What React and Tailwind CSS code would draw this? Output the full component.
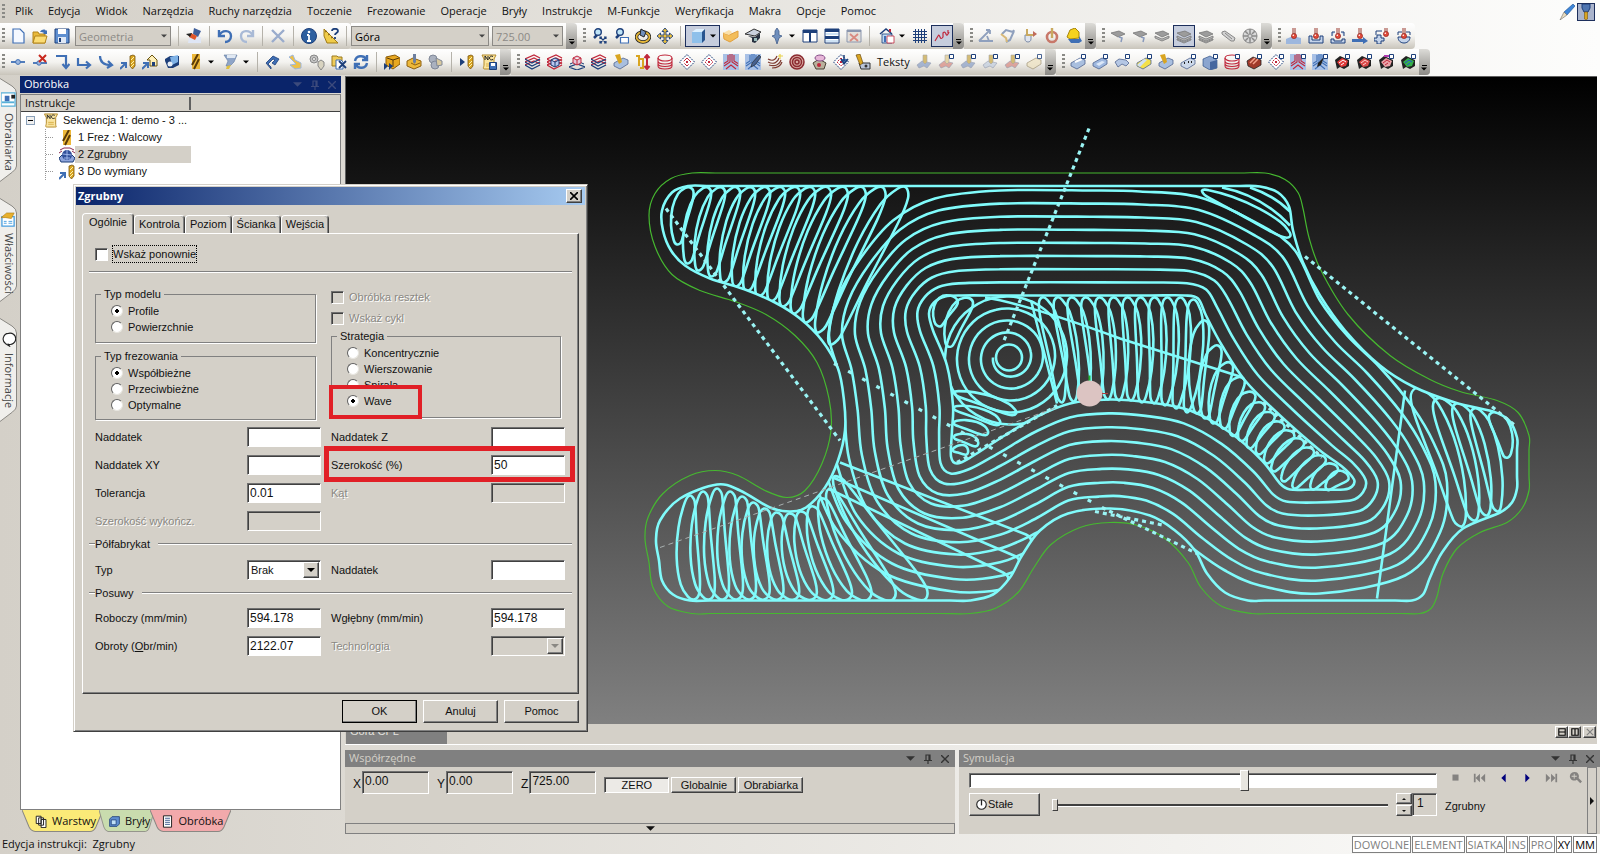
import React, { useState } from 'react';
import clsx from 'clsx';

/* ---------- icons ---------- */

const N = '#1d3f7a';
const B = '#3f6fb5';
const G = '#d9a521';
const R = '#c0283c';

const Layers = ({ c = N, d = R }) => (
  <g fill="none" strokeWidth="1.300">
    <path d="M0 5l9-4 6 3M0 8l9-4 6 3M0 11l9-4 6 3" stroke={d} />
    <path d="M0 5l7 4 8-4M0 8l7 4 8-4M0 11l7 4 8-4" stroke={c} />
  </g>
);
const Diamond = ({ inner }) => (
  <g fill="none">
    <path d="M8 .5L15.500 8 8 15.500.5 8z" stroke={N} strokeDasharray="2 1" fill="#fff" />
    <path d="M8 4l4 4-4 4-4-4z" stroke={R} strokeDasharray={inner ? '2 1' : '6 3'} />
    <path d="M8 7l1 1-1 1-1-1z" stroke={R} />
  </g>
);
const Badge = () => <path d="M11.500.5h4v4h-4z" fill="#fff" stroke={N} />;
const Slab = ({ c = '#a9bfdf', s = '#51658f' }) => <path d="M1 9l9-5 5 2v4l-8 5-6-3z" fill={c} stroke={s} strokeWidth=".8" />;
const Drill = ({ x = 8, c = G }) => (
  <g transform={`translate(${x} 0)`}>
    <path d="M0 2l3-1 2 1v10l-2.500 3L0 12z" fill={c} stroke="#7a5510" strokeWidth=".8" />
    <path d="M1 6l3-3M1 10l3-3M1 13l3-3" stroke="#fff3b0" />
  </g>
);
const Lens = () => (
  <g>
    <path d="M3 10l3-3" stroke={N} strokeWidth="2.500" />
    <circle cx="7" cy="4" r="3.300" fill="#bfe4f7" stroke={N} strokeWidth="1.400" />
  </g>
);
const Probe = () => (
  <g>
    <path d="M7 0v7M9 0v7" stroke="#9a3a30" />
    <circle cx="8" cy="8" r="2.600" fill="#e04a3a" stroke="#8c1a14" strokeWidth=".6" />
    <circle cx="7.300" cy="7.300" r=".8" fill="#fff" />
  </g>
);
const Rings = ({ c = R }) => (
  <g fill="none" stroke={c} strokeWidth="1.100">
    <ellipse cx="8" cy="4" rx="7" ry="3" />
    <path d="M1 4v8c0 4 14 4 14 0V4M1 7c0 4 14 4 14 0M1 9.500c0 4 14 4 14 0" />
  </g>
);
const Sheet = ({ lines }) => (
  <g fill="#9c9c9c" stroke="#777" strokeWidth=".8">
    <path d="M1 5l8-2 6 3-7 3z" />
    {lines > 1 && <path d="M1 8l7 3 7-3v2l-7 3-7-3z" fill="#b4b4b4" />}
    {lines > 2 && <path d="M1 11l7 3 7-3v1l-7 3-7-3z" fill="#c4c4c4" />}
    {lines === 1 && <path d="M9 9l3 1-1 4" fill="none" stroke="#8899bb" strokeWidth="1.500" />}
  </g>
);
const Hollow = ({ c, d }) => (
  <g>
    <path d="M1 6l5-4 9 4v6l-5 3-4-2-3 2z" fill="#222" />
    <path d="M3 8l5-4 6 3-2 5-5 1z" fill={c} />
    <path d="M5 9l4-3 3 2M7 11l3-2" stroke={d} fill="none" />
  </g>
);
const Blue3 = ({ c = R }) => (
  <g>
    <path d="M0 0h16v16H0z" fill="#a9c1e6" />
    <path d="M7 0v8l-6 4M9 0v8l6 4M5 1v6L1 9.500M11 1v6l4 2.500M3 15l5-4 5 4" stroke={c} fill="none" strokeWidth="1.100" />
  </g>
);
const Tilted = ({ c, d = '#c9a94a' }) => (
  <g opacity=".75">
    <path d="M1 11l5-4 9 2-4 5-3-2-5 2z" fill={c} stroke="#7c86a0" strokeWidth=".6" />
    <path d="M7 1h4v7l-2 2-2-2z" fill={d} stroke="#8d8d8d" strokeWidth=".6" />
  </g>
);
const Roll = () => (
  <g>
    <path d="M1 1h14l-2 4v7c0 3 2 3-1 3H4c-3 0-1-2-1-4V5z" fill="#f9e4a0" stroke="#b38a2a" />
    <path d="M4 6V2l3 4V2M12 2.500c-2-1-3.500 0-3.500 1.500s1.500 2.500 3.500 1.500" stroke="#222" fill="none" />
    <path d="M5 10h6M5 12h6" stroke="#d9b04a" />
  </g>
);

const icons = {
  new: <path d="M3 1h7l4 4v10H3z" fill="#f4f8ff" stroke={B} strokeWidth="1.200" />,
  open: <g><path d="M1 4h5l1 2h6v9H1z" fill="#e9b93a" stroke="#b3841a" /><path d="M3 8h12l-2 7H1z" fill="#fbdc74" stroke="#b3841a" /><path d="M8 4c2-3 5-3 6-1l1-1v4h-4l1-1c-1-1-2-1-4-1z" fill={B} /></g>,
  save: <g><path d="M1 1h14v14H1z" fill="#5f8fd0" stroke={N} /><path d="M4 1h8v5H4z" fill="#fff" /><path d="M4 9h8v6H4z" fill="#dfe8f5" /><path d="M5 10h2v4H5z" fill={N} /></g>,
  paint: <g><path d="M3 9h12v6H2z" fill="#dfe6f5" /><path d="M8 0l7 3-3 6-5-3z" fill="#3f5f9a" /><path d="M5 5l6 3-2 4-6-3z" fill="#e0562a" /><path d="M0 6l6-1-2 4z" fill="#222" /></g>,
  undo: <path d="M2 2v6h6M2 8C5 1 14 2 14 8c0 4-3 6-6 6" fill="none" stroke={B} strokeWidth="2.400" />,
  redo: <path d="M14 2v6H8M14 8C11 1 2 2 2 8c0 4 3 6 6 6" fill="none" stroke="#a9bad6" strokeWidth="2.400" />,
  cross: <path d="M2 2l12 12M14 2L2 14" stroke="#9aaccc" strokeWidth="2.400" />,
  info: <g><circle cx="8" cy="8" r="7.500" fill="#2d5f9f" stroke={N} /><path d="M8 7v6M6 7h2M6 13h4" stroke="#fff" strokeWidth="1.800" /><circle cx="8" cy="4" r="1.300" fill="#fff" /></g>,
  measure: <g><path d="M1 1l14 14H4L1 8z" fill="#f0cc4a" stroke="#a07a14" /><path d="M2 4l2-1M5 7l2-1M8 10l2-1" stroke="#7a5510" /><path d="M9 3c0-3 6-3 6 0 0 2-3 2-3 4M12 9v2" stroke={N} strokeWidth="1.800" fill="none" /></g>,
  zoomFit: <g><Lens /><path d="M9 9l6 6M15 9l-6 6M9 11V9h2M13 9h2v2M9 13v2h2M15 13v2h-2" stroke={N} fill="none" strokeWidth="1.200" /></g>,
  zoomBox: <g><Lens /><path d="M7.500 9.500h8v5.500h-8z" fill="#fff" stroke={B} strokeWidth="1.200" /></g>,
  orbit: <g fill="none"><ellipse cx="8" cy="9" rx="6.500" ry="5" stroke="#222" strokeWidth="3.400" /><ellipse cx="8" cy="9" rx="6.500" ry="5" stroke="#e8b93a" strokeWidth="1.800" /><path d="M6 1l5 3-2 5-4-2z" fill="#6f8fbd" stroke="#222" /></g>,
  pan: <path d="M8 0l3 3.500H9V7h3.500V5L16 8l-3.500 3V9H9v3.500h2L8 16l-3-3.500h2V9H3.500v2L0 8l3.500-3v2H7V3.500H5z" fill="#f0c23a" stroke={N} strokeWidth=".9" />,
  cube: <g><path d="M2 4l4-3h9l-3 3z" fill="#dff1ff" /><path d="M2 4h10v11H2z" fill="#8fc0ea" /><path d="M12 4l3-3v11l-3 3z" fill="#27548f" /></g>,
  part: <g><path d="M0 5l6 2 9-4v6l-8 5-6-3z" fill="#f3bd5a" stroke="#e0a040" /><path d="M0 5l6-3 3 2-3 3z" fill="#fbe0a8" /></g>,
  shaded: <g><path d="M0 6l9-5 7 3-6 4z" fill="#c9d0dc" stroke="#333" /><path d="M3 8l7 1 5-4v5l-5 5-3-1v-4z" fill="#27303f" /><path d="M9 10h3v3H9z" fill="#9bb" /></g>,
  pin: <path d="M8 0l2 3v4l3 1-3 2-2 6-2-6-3-2 3-1V3z" fill="#6f8fbd" stroke="#445f8c" strokeWidth=".8" />,
  splitV: <g><path d="M1 2h14v12H1z" fill="#fff" stroke={N} /><path d="M1 2h14v3H1z" fill={N} /><path d="M8 2v12" stroke={N} strokeWidth="2" /></g>,
  splitH: <g><path d="M1 1h14v14H1z" fill="#fff" stroke={N} /><path d="M1 1h14v3H1zM1 8h14v3H1z" fill={N} /><path d="M2 5h12v2H2zM2 12h12v2H2z" fill="#cfe3f5" /></g>,
  closeWin: <g><path d="M1 2h14v12H1z" fill="#e4e0da" stroke="#8a96ae" /><path d="M1 2h14v2H1z" fill="#8a96ae" /><path d="M4 6l8 7M12 6l-8 7" stroke="#d98a80" strokeWidth="1.800" /></g>,
  house: <g><path d="M1 6l6-5 6 5" fill="none" stroke={N} strokeWidth="1.500" /><path d="M11 1v3" stroke={R} strokeWidth="2" /><path d="M3 6h10v9H3z" fill="#bdd8f2" stroke={N} strokeWidth=".8" /><path d="M8 8h7v7H8z" fill="#fff" stroke={R} strokeWidth=".8" /><path d="M5 8h2v6H5z" fill={B} /></g>,
  grid: <path d="M3.500 1v14M6.500 1v14M9.500 1v14M12.500 1v14M1 3.500h14M1 6.500h14M1 9.500h14M1 12.500h14" stroke={N} />,
  curve: <path d="M1 13l3-5q1-2 2 1t3 0V5q2-2 3 1t3-2M14 2v3" stroke={R} fill="none" strokeWidth="1.200" />,
  angle: <path d="M1 13h14M1 13L12 2M12 2v4M12 2H8M11 13l-2-5" stroke="#8fa0bd" fill="none" strokeWidth="1.800" />,
  turn: <g fill="none" strokeWidth="2"><path d="M2 6l4-4 7 2 1-2M14 3l-4 9-4 2" stroke="#8fa0bd" /><path d="M1 6l5 4 1 4" stroke="#d8b978" /></g>,
  hook: <g><path d="M3 7h6v4c0 4-6 4-6 0z" fill="#dfe4ee" stroke="#7d8ca8" /><path d="M5 1v6h7" fill="none" stroke="#c9a960" strokeWidth="2" /><path d="M11 3l4 3-4 3z" fill="#c06a5a" /></g>,
  loop: <g fill="none"><circle cx="8" cy="9" r="5" stroke="#c8786a" strokeWidth="2.600" /><path d="M8 0v10" stroke="#c9a960" strokeWidth="2.400" /></g>,
  yellow: <g><path d="M4 2l5-2 4 4v6l-9 1-3-2z" fill="#f6d21e" stroke="#a8860a" /><path d="M2 11h11V8l3 5-3 2H5z" fill={B} /></g>,
  sheet1: <Sheet lines={1} />,
  sheet2: <Sheet lines={2} />,
  sheet3: <Sheet lines={3} />,
  clip: <path d="M2 4l3-1 10 7-1 3-3 0L2 6zM5 5l7 6" fill="#d2d2d2" stroke="#888" />,
  wheel: <g fill="none" stroke="#8a8a8a"><circle cx="8" cy="8" r="7" fill="#d8d8d8" /><circle cx="8" cy="8" r="2" /><path d="M8 1v5M8 10v5M1 8h5M10 8h5M3 3l3 3M13 13l-3-3M13 3l-3 3M3 13l3-3" strokeWidth="1.500" /></g>,
  probe1: <g><path d="M0 11l7-3 8 2v6H0z" fill="#9db7de" /><Probe /></g>,
  probe2: <g><path d="M1 8v7h14V8h-3v4H4V8z" fill="#c5d4ea" stroke={N} /><Probe /></g>,
  probe3: <g><path d="M2 8V4h3M14 8V4h-3M1 15h14v-4h-3v2H4v-2H1z" fill="#c5d4ea" stroke={N} /><Probe /></g>,
  probe4: <g><path d="M0 11h11V9l5 4-5 3v-2H0z" fill={B} /><Probe /></g>,
  probe5: <g><path d="M3 7h4v3h3v3H7v3H3v-3H0v-3h3z" fill="#c5d4ea" stroke={N} /><path d="M2 7V3h6" fill="none" stroke={N} /><g transform="translate(4 -2)"><Probe /></g></g>,
  probe6: <g><path d="M2 9h12c0 8-12 8-12 0z" fill="#c5d4ea" stroke={N} /><path d="M2 7V4h4M14 7V4h-4" fill="none" stroke={N} /><Probe /></g>,
  node: <g><path d="M1 8h14" stroke={B} strokeWidth="1.800" /><circle cx="8" cy="8" r="2.400" fill="#9db7de" stroke={B} /></g>,
  nodeDel: <g><path d="M1 9h14" stroke={B} strokeWidth="1.800" /><circle cx="7" cy="9" r="2.200" fill="#9db7de" stroke={B} /><path d="M7 1l7 7M14 1L7 8" stroke="#c8281e" strokeWidth="2" /></g>,
  stepDown: <path d="M2 2h10v10M8.500 10l3.500 4 3.500-4" fill="none" stroke={B} strokeWidth="2.200" />,
  stepRight: <path d="M2 4v7h11M10 7.500l4 3.500-4 3.500" fill="none" stroke={B} strokeWidth="2.200" />,
  curveRight: <path d="M2 2c0 6 4 9 11 9M10 7l4 4-5 3" fill="none" stroke={B} strokeWidth="2.200" />,
  drillIn: <g><path d="M0 15l5-5M1 9h5v5" stroke={B} strokeWidth="2" fill="none" /><Drill x={10} /></g>,
  drillHome: <g><path d="M0 15l5-5M1 9h5v5" stroke={B} strokeWidth="2" fill="none" /><path d="M5 6l5-5 5 5v6H8V6z" fill="#fff0b8" stroke="#6a5510" /><path d="M10 8h3v4h-3z" fill={N} /></g>,
  machine: <g><path d="M1 7l3 7h5l6-3V2H6L1 5z" fill={N} /><path d="M6 3l8-2v7l-6 3z" fill="#7fb2e6" /><circle cx="6" cy="10" r="2.500" fill="#e6eef8" /></g>,
  mill: <g><path d="M4 0h8v15H4z" fill="#edb83a" /><path d="M4 11l6-11M6 15l5-10" stroke="#5b3a06" strokeWidth="2" /></g>,
  funnel: <g><path d="M1 1h13l-3 7-4 4H3l2-5z" fill="#8fa5c8" stroke="#5f789f" strokeWidth=".6" /><path d="M4 1h9l-1 3H4z" fill="#e0e8f2" /><path d="M4 12l4-1-2 4H3z" fill="#e0c040" /></g>,
  blueTool: <path d="M1 9l7-7 6 3-4 6-3-2 3-3-2-1-5 5 3 3v2z" fill={B} stroke={N} strokeWidth=".8" />,
  goldTool: <path d="M2 3l4-2 2 5 6 3v5l-6 1-5-4 6-1z" fill="#edc04a" stroke="#9db7de" />,
  gears: <g fill="#c4c4c4" stroke="#888"><circle cx="5" cy="5" r="4" /><circle cx="5" cy="5" r="1.500" fill="#fff" /><path d="M9 8l3-2 3 2v4l-3 4-3-4z" fill="#d8d3c0" /></g>,
  copyDel: <g><path d="M1 2h5l1 1h4v9H1z" fill="#f0cc5a" stroke="#9b7a1e" /><path d="M5 6h5l2 2v7H5z" fill="#fff" stroke={B} /><path d="M8 7l7 7M15 7l-7 7" stroke={N} strokeWidth="1.800" /></g>,
  refresh: <path d="M2 7c1-6 9-6 11-2M14 1v5H9M14 9c-1 6-9 6-11 2M2 15v-5h5" fill="none" stroke={B} strokeWidth="2.400" />,
  goldBox: <g><path d="M2 3l9-2 5 3v6l-7 5-7-4z" fill="#e8a820" stroke="#8d5c06" /><path d="M3 4l6 2v7M9 6l6-2" stroke="#5b3a06" fill="none" /><path d="M0 9l4 3-4 4zM5 9l4 3-4 4z" fill={N} /></g>,
  goldHand: <g><path d="M1 7l6-3 8 3v5l-7 3-7-3z" fill="#edb83a" stroke="#8d6010" /><path d="M7 0h3v8l-1.500 2L7 8z" fill="#6d7f9f" /><path d="M5 9l4 2 5-2" stroke="#8d6010" fill="none" /></g>,
  grayGear: <g fill="#aab1bf" stroke="#808898"><circle cx="5" cy="5" r="4" /><circle cx="7" cy="11" r="4" /><path d="M8 4l6 3v4l-5 1z" fill="#d8c9a0" /></g>,
  playDrill: <g><path d="M1 4l5 4-5 4z" fill={N} /><Drill x={9} /></g>,
  ncSave: <g><Roll /><path d="M8.500 8.500h7v7h-7z" fill={B} stroke={N} /><path d="M10 9h4v3h-4z" fill="#fff" /></g>,
  nc: <Roll />,
  layers1: <Layers />,
  layers2: <g><Layers c={R} d={R} /><path d="M4 6l4-2 4 2v5l-4 2-4-2zM8 8v5M4 6l4 2 4-2" fill="#b9c8ee" stroke={N} /></g>,
  layers3: <g><path d="M0 13l8-3 8 3-8 3z" fill="none" stroke={N} strokeWidth="1.200" /><path d="M1 10l7-3 7 3" stroke={N} fill="none" /><path d="M4 4l4-2 4 2v5l-4 2-4-2zM8 6v5M4 4l4 2 4-2" fill="#e6c6da" stroke={R} /></g>,
  layers4: <Layers c={N} />,
  pocket: <g><Slab /><path d="M2 1l5-1 2 8-3 2z" fill={G} /></g>,
  depth: <g><path d="M1 2h3v10M4 5h4v9H5" stroke={G} fill="none" strokeWidth="2" /><path d="M12 1v14M9.500 4L12 1l2.500 3M9.500 12l2.500 3 2.500-3" stroke={R} fill="none" strokeWidth="2" /></g>,
  rings: <Rings />,
  diamond1: <Diamond />,
  diamond2: <Diamond inner />,
  blue3: <Blue3 />,
  bluePen: <g><Blue3 c={B} /><path d="M14 1l-7 8-1 4 4-2 6-8z" fill="#46618f" stroke="#222" strokeWidth=".6" /></g>,
  waves: <g fill="none" strokeWidth="1.200"><path d="M1 5c5 3 8 0 9-3M1 8c6 3 10 0 11-4M2 11c7 2 11-1 12-5M5 14c6 0 9-3 10-6" stroke="#7d3a30" /><path d="M13 0v5M11 2h5" stroke="#e8d24a" /></g>,
  target: <g fill="none" stroke="#8b2a30" strokeWidth="1.500"><circle cx="8" cy="8" r="7" fill="#d8a8a0" /><circle cx="8" cy="8" r="4.500" /><circle cx="8" cy="8" r="2" /></g>,
  dome: <g><path d="M2 9l6-4 7 4-2 6-8 0z" fill="#b9b09c" stroke="#4a4236" /><ellipse cx="9" cy="4" rx="5" ry="3" fill="#e7b6d8" stroke="#86508a" /><circle cx="8" cy="11" r="2" fill={R} /></g>,
  diamond3: <g><Diamond inner /><path d="M11 1v6M8 5l3 5 4-5" stroke={N} fill={B} strokeWidth="1.500" /></g>,
  drillPlate: <g><path d="M4 9l11 0v6H6z" fill="#b9c4d8" stroke="#333" /><path d="M1 1l4-1 3 9-3 2z" fill={G} stroke="#5b3a06" strokeWidth=".6" /><circle cx="11" cy="12" r="1.500" fill="#333" /></g>,
  tilt1: <Tilted c="#8ea2c8" />,
  tilt2: <g><Tilted c="#d88d84" d="#dfc98e" /><Badge /></g>,
  tilt3: <g><Tilted c="#8ea2c8" /><Badge /></g>,
  tilt4: <g><Tilted c="#c3cede" /><Badge /></g>,
  tilt5: <g><Tilted c="#d88d84" /><Badge /></g>,
  tilt6: <g opacity=".8"><Slab c="#eee3c4" s="#9a8d6c" /><Badge /></g>,
  slab1: <g><Slab /><path d="M5 8l7-3" stroke="#fff" strokeWidth="2" /><Badge /></g>,
  slab2: <g><Slab c="#9db7de" /><path d="M4 10l6-3 3 1-6 4z" fill="#dce8f8" /><Badge /></g>,
  slab3: <g><path d="M1 8l4-3 7 1 3 3-3 3-4-2-4 3z" fill="#b5c7e4" stroke="#51658f" strokeWidth=".8" /><Badge /></g>,
  slab4: <g><Slab c="#f3e04a" /><path d="M1 11l7-6 3 1-7 7z" fill="#cfe0f5" /><Badge /></g>,
  slabDots: <g><Slab c="#cdd9ea" /><path d="M4 9h1M8 8h1M11 8h1" stroke="#222" strokeWidth="2" /><Badge /></g>,
  block: <g><path d="M1 5l7-3 7 4v8l-7 2-7-4z" fill="#8ba5cf" stroke={N} strokeWidth=".6" /><path d="M8 8l7-2v8l-7 2z" fill="#46679f" /><Badge /></g>,
  ringsB: <g><Rings /><Badge /></g>,
  redBlock: <g><path d="M1 7l6-4 8 3v5l-7 4-6-3z" fill="#a03a2a" stroke="#222" strokeWidth=".8" /><path d="M4 9l5-5M7 10l5-5" stroke="#f3a08a" strokeWidth="1.500" /><Badge /></g>,
  diamondB: <g><Diamond inner /><Badge /></g>,
  blue3B: <g><Blue3 /><Badge /></g>,
  bluePenB: <g><Blue3 c={B} /><path d="M12 3l-6 6-1 4 4-2z" fill="#222" /><Badge /></g>,
  hol1: <g><Hollow c="#e23a3a" d="#fff" /><Badge /></g>,
  hol2: <g><Hollow c="#d94a4a" d="#ffd0d0" /><Badge /></g>,
  hol3: <g><Hollow c="#e9a3a8" d={R} /><path d="M6 2h6" stroke="#b03ab0" strokeWidth="2" /><Badge /></g>,
  hol4: <g><Hollow c="#35b04a" d="#2a4fd0" /><Badge /></g>,
  rough: <g><path d="M1 3l4-2h6l4 2M0 6l3-2M16 6l-3-2" stroke="#8b2a50" fill="none" /><path d="M0 11l3-3h10l3 3-2 4H2z" fill="#8fa5dc" stroke={N} /><circle cx="8" cy="8" r="5" fill="#32509a" /><path d="M8 3v10M3.500 7l9 1M5 11h6" stroke="#9fb5ea" /></g>,
  pencil: <g><path d="M14 0l2 2-8 9-3-3z" fill="#3f86d8" stroke="#1a4f90" strokeWidth=".6" /><path d="M5 8l3 3-7 5z" fill="#e8dcc0" stroke="#555" strokeWidth=".5" /></g>,
  spindle: <g><path d="M4 0h8v4l-2 4H6L4 4z" fill="#4f75b0" stroke={N} /><path d="M6.500 8h3v7l-1.500 1-1.500-1z" fill={G} stroke="#7a5510" strokeWidth=".6" /></g>,
  lathe: <g><path d="M0 1h15v14H0z" fill="#fff" stroke="#58b0d8" strokeWidth="1.400" /><path d="M4 4h5v6H4z" fill={B} /><path d="M11 3h4v4h-4z" fill="#222" /><path d="M1 11h13" stroke="#58b0d8" strokeWidth="2" /></g>,
  props: <g><path d="M1 5h13v10H1z" fill="#fff" stroke="#4aa0e0" strokeWidth="1.400" /><path d="M3 10h3M3 12h3M8 10h4M8 12h4" stroke="#4aa0e0" /><path d="M0 6l6-5 8 0-3 6-6-1z" fill="#e8b02c" stroke="#a87a14" strokeWidth=".6" /></g>,
  bubble: <path d="M8 1.500a6 6 0 1 1 0 11.500l1 2-4-2.500A6 6 0 0 1 8 1.500z" fill="#fff" stroke="#222" strokeWidth="1.200" />,
  stack: <path d="M1.500 1.500h6v9h-6zM4.500 3.500h6v9h-6zM7.500 5.500h6v10h-6z" fill="#fff" stroke="#222" strokeWidth="1.200" />,
  solid: <g stroke={N}><path d="M2 5l3-3h9v9l-3 3H2z" fill="#5f8fd0" /><path d="M4 6h6v6H4z" fill="#bfe0f7" /></g>,
  list: <g><path d="M3 1h10v14H3z" fill="#fff" stroke="#222" strokeWidth="1.200" /><path d="M5 4h6M5 6.500h6M5 9h6M5 11.500h6" stroke={N} /></g>,
};

function Icon({ name, className = 'h-4 w-4' }) {
  return <svg viewBox="0 0 16 16" className={clsx('shrink-0', className)} aria-hidden="true">{icons[name]}</svg>;
}

const Caret = ({ className }) => (
  <svg viewBox="0 0 8 4" className={clsx('h-1 w-2', className)} aria-hidden="true"><path d="M0 0h8L4 4z" fill="currentColor" /></svg>
);

/* ---------- toolbars ---------- */

const Grip = () => <span className="mx-[2px] h-4 w-[3px] shrink-0 bg-[repeating-linear-gradient(#8a8a86_0_2px,transparent_2px_4px)]" />;
const Divider = () => <span className="mx-1 h-5 w-px shrink-0 bg-[#b5b2aa]" />;

const Overflow = () => (
  <button aria-label="Więcej" className="flex h-full w-[11px] shrink-0 flex-col items-center justify-end gap-px rounded-r bg-linear-to-b from-[#dddcd8] to-[#8c8a86] pb-1 text-black">
    <span className="h-px w-[5px] bg-black" />
    <Caret className="w-[6px]" />
  </button>
);

function ToolButton({ name }) {
  const [icon, flag] = name.split(':');
  const pressed = flag === 'on' || flag === 'onmenu';
  const menu = flag === 'menu' || flag === 'onmenu';
  return (
    <button
      aria-label={icon}
      className={clsx(
        'flex h-[22px] shrink-0 items-center justify-center',
        menu ? 'w-[35px] gap-1' : 'w-[22px]',
        pressed && 'border border-[#1d2f5c] bg-[#c6cddd]'
      )}
    >
      <Icon name={icon} />
      {menu && <Caret className="w-[6px] text-black" />}
    </button>
  );
}

function ToolGroup({ items, more = true, children }) {
  return (
    <div className="flex h-full shrink-0 items-center rounded-r bg-linear-to-b from-white via-[#f4f3f0] to-[#c9c5bb] not-first:pl-1">
      <Grip />
      {children}
      {items.map((item, i) => {
        if (item === '|') return <Divider key={i} />;
        if (item[0] === '"') return <button key={i} className="px-[3px] text-[11px]">{item.slice(1)}</button>;
        return <ToolButton key={i} name={item} />;
      })}
      {more && <Overflow />}
    </div>
  );
}

function FlatSelect({ value, className, muted }) {
  return (
    <span className={clsx('relative mr-[3px] h-5 shrink-0', className)}>
      <select
        aria-label={value}
        defaultValue={value}
        disabled={muted}
        className={clsx('block h-full w-full appearance-none border border-[#8c8a86] bg-[#d4d0c8] px-[3px] text-[11px] leading-none opacity-100', muted ? 'text-[#8c8a86]' : 'text-black')}
      >
        <option>{value}</option>
      </select>
      <Caret className="pointer-events-none absolute top-2 right-1 w-[6px] text-[#444]" />
    </span>
  );
}

const editTools = ['paint', '|', 'undo', 'redo', '|', 'cross', '|', 'info', 'measure', '|'];
const viewTools = ['zoomFit', 'zoomBox', 'orbit', 'pan', '|', 'cube:onmenu', 'part', 'shaded', 'pin:menu', 'splitV', 'splitH', 'closeWin', '|', 'house:menu', 'grid', 'curve:on'];
const turnTools = ['angle', 'turn', 'hook', 'loop', 'yellow'];
const sheetTools = ['sheet1', 'sheet1', 'sheet2', 'sheet3:on', 'sheet3', 'clip', 'wheel'];
const probeTools = ['probe1', 'probe2', 'probe3', 'probe4', 'probe5', 'probe6'];
const moveTools = ['node', 'nodeDel', 'stepDown', 'stepRight', 'curveRight', 'drillIn', 'drillHome', 'machine', 'mill:menu', 'funnel:menu', '|', 'blueTool', 'goldTool', 'gears', 'copyDel', 'refresh', '|', 'goldBox', 'goldHand', 'grayGear', '|', 'playDrill', 'ncSave'];
const cycleTools = ['layers1', 'layers2', 'layers3', 'layers4', 'pocket', 'depth', 'rings', 'diamond1', 'diamond2', 'blue3', 'bluePen', 'waves', 'target', 'dome', 'diamond3', 'drillPlate', '"Teksty', 'tilt1', 'tilt2', 'tilt3', 'tilt4', 'tilt5', 'tilt6'];
const surfaceTools = ['slab1', 'slab2', 'slab3', 'slab4', 'pocket', 'slabDots', 'block', 'ringsB', 'redBlock', 'diamondB', 'blue3B', 'bluePenB', 'hol1', 'hol2', 'hol3', 'hol4'];

const menuItems = ['Plik', 'Edycja', 'Widok', 'Narzędzia', 'Ruchy narzędzia', 'Toczenie', 'Frezowanie', 'Operacje', 'Bryły', 'Instrukcje', 'M-Funkcje', 'Weryfikacja', 'Makra', 'Opcje', 'Pomoc'];

function Header() {
  return (
    <header className="shrink-0">
      <div className="flex h-[23px] items-center">
        <Grip />
        <nav className="flex flex-1 gap-[15px] pb-px pl-2 text-[11px]">
          {menuItems.map((m) => <button key={m} className="whitespace-nowrap">{m}</button>)}
        </nav>
        <button aria-label="CAD" className="px-[2px]"><Icon name="pencil" /></button>
        <button aria-label="CAM" className="mr-[5px] border border-[#1d2f5c] bg-[#aab4cc]"><Icon name="spindle" /></button>
      </div>
      <div className="flex h-[26px] overflow-hidden">
        <ToolGroup items={editTools} more={false}>
          <ToolButton name="new" />
          <ToolButton name="open" />
          <ToolButton name="save" />
          <FlatSelect value="Geometria" className="ml-[2px] w-24" muted />
          <Divider />
        </ToolGroup>
        <div className="flex h-full items-center bg-linear-to-b from-white via-[#f4f3f0] to-[#c9c5bb]">
          <FlatSelect value="Góra" className="w-[138px]" />
          <FlatSelect value="725.00" className="w-[71px]" muted />
          <Overflow />
        </div>
        <ToolGroup items={viewTools} />
        <ToolGroup items={turnTools} />
        <ToolGroup items={sheetTools} />
        <ToolGroup items={probeTools} more={false} />
      </div>
      <div className="flex h-[26px] overflow-hidden">
        <ToolGroup items={moveTools} />
        <ToolGroup items={cycleTools} />
        <ToolGroup items={surfaceTools} />
      </div>
    </header>
  );
}

/* ---------- left side ---------- */

const sideTabs = [
  { label: 'Obrabiarka', icon: 'lathe' },
  { label: 'Właściwości', icon: 'props' },
  { label: 'Informacje', icon: 'bubble' },
];

function SideTabs() {
  return (
    <div className="flex w-5 shrink-0 flex-col gap-4 pt-[2px]">
      {sideTabs.map((t) => (
        <button key={t.label} className="relative flex h-[104px] w-[17px] flex-col items-center pt-[14px] text-[#444]">
          <svg viewBox="0 0 17 104" preserveAspectRatio="none" className="absolute inset-0 h-full w-full" aria-hidden="true">
            <path d="M0 .5L12 8q4.500 3 4.500 7v73q0 3-4 6L0 103.500" fill="#f0efec" stroke="#8a8883" />
          </svg>
          <Icon name={t.icon} className="relative h-[15px] w-[15px]" />
          <span className="relative mt-[6px] text-[11px] leading-[14px] whitespace-nowrap [writing-mode:vertical-rl]">{t.label}</span>
        </button>
      ))}
    </div>
  );
}

function TitleTools({ className }) {
  return (
    <span className={clsx('flex items-center gap-[9px]', className)}>
      <button aria-label="Menu"><Caret className="h-[5px] w-[9px]" /></button>
      <button aria-label="Przypnij">
        <svg viewBox="0 0 8 10" className="h-[10px] w-2" aria-hidden="true"><path d="M2 6V1h4v5M5 1v5M0 6.500h8M4 7v3" stroke="currentColor" strokeWidth="1.200" fill="none" /></svg>
      </button>
      <button aria-label="Zamknij">
        <svg viewBox="0 0 8 8" className="h-2 w-2" aria-hidden="true"><path d="M0 0l8 8M8 0L0 8" stroke="currentColor" strokeWidth="1.400" /></svg>
      </button>
    </span>
  );
}

const treeItems = [
  { icon: 'mill', text: '1 Frez : Walcowy' },
  { icon: 'rough', text: '2 Zgrubny', active: true },
  { icon: 'drillIn', text: '3 Do wymiany' },
];

const bottomTabs = [
  { label: 'Warstwy', icon: 'stack', fill: '#fbea78', pad: 'pl-[13px] pr-[7px]' },
  { label: 'Bryły', icon: 'solid', fill: '#c9dcae', pad: 'pl-[9px] pr-1' },
  { label: 'Obróbka', icon: 'list', fill: '#f2a9ab', pad: 'pl-[11px] pr-2' },
];

function TreePanel() {
  return (
    <aside className="flex w-[321px] shrink-0 flex-col">
      <div className="flex h-[17px] shrink-0 items-center justify-between bg-[#0a246a] pr-[5px] pl-1 text-[11px] text-white">
        Obróbka
        <TitleTools className="text-[#3c4a7c]" />
      </div>
      <div className="mt-px flex min-h-0 flex-1 flex-col border border-[#808080] bg-white">
        <div className="flex h-[17px] shrink-0 items-center border-b border-[#404040] bg-[#d4d0c8] text-[11px]">
          <span className="flex h-[13px] w-[170px] items-center border-r-2 border-[#606060] pl-1">Instrukcje</span>
        </div>
        <div className="font-['Liberation_Sans',Arial,sans-serif] text-[11px]">
          <div className="flex h-[17px] items-center gap-1 pl-[5px]">
            <button aria-label="Zwiń" className="flex h-[9px] w-[9px] items-center justify-center border border-[#8aa0b8] bg-[#f0f0f0]">
              <span className="h-px w-[5px] bg-black" />
            </button>
            <Icon name="nc" className="ml-1 h-[15px] w-4" />
            <span>Sekwencja 1: demo - 3 ...</span>
          </div>
          <ul className="ml-6 border-l border-dotted border-[#999]">
            {treeItems.map((t) => (
              <li key={t.text} className="flex h-[17px] items-center">
                <span className="mr-[6px] w-[7px] border-t border-dotted border-[#999]" />
                <Icon name={t.icon} />
                <span className={clsx('flex h-full w-[116px] items-center pl-[3px]', t.active && 'bg-[#d4d0c8]')}>{t.text}</span>
              </li>
            ))}
          </ul>
        </div>
      </div>
      <div className="flex h-6 shrink-0 pl-[2px] text-[11px]">
        {bottomTabs.map((t) => (
          <button key={t.label} className={clsx('relative -mr-1 flex h-[22px] items-center gap-1', t.pad)}>
            <svg viewBox="0 0 80 22" preserveAspectRatio="none" className="absolute inset-0 h-full w-full" aria-hidden="true">
              <path d="M0 0l7 17q2 4 6 4.500h54q4 0 6-4.500L80 0" fill={t.fill} stroke="#8a8883" />
            </svg>
            <Icon name={t.icon} className="relative h-[13px] w-[13px]" />
            <span className="relative">{t.label}</span>
          </button>
        ))}
      </div>
    </aside>
  );
}

/* ---------- toolpath drawing ---------- */

// smooth curve through the points, handles kept shorter than the segment
function smooth(pts, closed) {
  const n = pts.length;
  const at = (i) => (closed ? pts[(i + n) % n] : pts[Math.max(0, Math.min(n - 1, i))]);
  const handle = (a, b, len) => {
    let dx = (b[0] - a[0]) / 6;
    let dy = (b[1] - a[1]) / 6;
    const m = Math.hypot(dx, dy);
    const max = len * 0.4;
    if (m > max) { dx *= max / m; dy *= max / m; }
    return [dx, dy];
  };
  let d = `M${pts[0][0]} ${pts[0][1]}`;
  for (let i = 0; i < (closed ? n : n - 1); i++) {
    const [p0, p1, p2, p3] = [at(i - 1), at(i), at(i + 1), at(i + 2)];
    const len = Math.hypot(p2[0] - p1[0], p2[1] - p1[1]);
    const h1 = handle(p0, p2, len);
    const h2 = handle(p1, p3, len);
    d += `C${(p1[0] + h1[0]).toFixed(1)} ${(p1[1] + h1[1]).toFixed(1)} ${(p2[0] - h2[0]).toFixed(1)} ${(p2[1] - h2[1]).toFixed(1)} ${p2[0].toFixed(1)} ${p2[1].toFixed(1)}`;
  }
  return d + (closed ? 'Z' : '');
}

const stock = [
  [692, 172.5], [720, 172.5], [1240, 172.5], [1265, 172.5], [1285, 179], [1298, 192], [1303, 208], [1309, 237], [1320, 268], [1348, 314], [1390, 355],
  [1430, 379], [1460, 391], [1497, 400], [1518, 412], [1529, 435], [1529, 450], [1529, 475], [1529, 490], [1522, 508], [1507, 522], [1480, 532], [1457, 548],
  [1443, 573], [1437, 596], [1431, 608], [1420, 613], [1400, 613], [1270, 613], [1252, 613], [1222, 606], [1201, 587], [1188, 562], [1165, 538], [1138, 525], [1110, 522],
  [1080, 527], [1051, 544], [1034, 567], [1018, 592], [995, 608], [970, 613], [940, 613], [710, 613], [692, 613], [668, 606], [653, 587], [649, 562], [645, 538],
  [648, 517], [663, 493], [690, 475], [715, 470], [738, 475], [765, 490], [787, 497], [805, 490], [822, 463], [831, 430], [829, 398], [817, 362], [795, 335],
  [766, 314], [735, 301], [700, 290], [672, 274], [655, 246], [649, 215], [655, 193], [671, 178],
];

const part = [
  [688, 185.5], [710, 185.5], [1240, 185.5], [1260, 186], [1278, 192], [1289, 206], [1293, 230], [1303, 262], [1320, 295], [1345, 330], [1380, 365], [1413, 386], [1455, 402],
  [1493, 411], [1509, 420], [1517, 437], [1517, 450], [1517, 475], [1517, 488], [1512, 502], [1500, 512], [1463, 528], [1442, 552], [1430, 577], [1423, 594], [1412, 600],
  [1395, 600], [1265, 600], [1248, 600], [1225, 592], [1207, 573], [1195, 550], [1175, 530], [1150, 515], [1110, 508], [1068, 513], [1040, 530], [1022, 555], [1010, 577],
  [993, 594], [970, 600], [950, 600], [710, 600], [690, 600], [673, 594], [662, 580], [659, 560], [656, 540], [660, 520], [680, 498], [717, 484], [740, 490], [770, 507], [790, 511],
  [806, 507], [825, 487], [838, 460], [845, 430], [844, 400], [838, 368], [822, 340], [800, 318], [775, 302], [745, 289], [710, 278], [685, 265], [671, 250], [663, 230], [662, 210], [672, 192],
];

// [inner point, outer point] pairs; the eight passes between them are interpolated
const stations = [
  [[1000, 295], [1000, 190]], [[1100, 295], [1090, 190]], [[1150, 295], [1140, 191]], [[1185, 295], [1200, 197]], [[1198, 298], [1263, 226]],
  [[1206, 315], [1295, 250]], [[1222, 345], [1320, 300]], [[1245, 380], [1348, 336]], [[1280, 415], [1380, 367]], [[1320, 450], [1413, 407]],
  [[1342, 466], [1434, 443]], [[1354, 479], [1447, 482]], [[1352, 486], [1440, 532]], [[1344, 489], [1405, 575]], [[1315, 489], [1320, 593]],
  [[1290, 489], [1260, 585]], [[1280, 483], [1225, 570]], [[1262, 460], [1193, 548]], [[1230, 432], [1165, 525]], [[1190, 410], [1140, 513]],
  [[1150, 402], [1115, 509]], [[1110, 399], [1097, 510]], [[1070, 403], [1068, 514]], [[1035, 417], [1035, 533]], [[1000, 438], [1000, 548]],
  [[972, 456], [957, 554]], [[957, 463], [905, 543]], [[951, 456], [867, 508]], [[952, 430], [849, 458]], [[953, 405], [844, 410]],
  [[947, 365], [838, 370]], [[933, 330], [829, 335]], [[929, 313], [837, 298]], [[934, 302], [861, 257]], [[945, 296], [893, 220]], [[962, 295], [935, 198]],
];
const ring = (k) => stations.map(([p, q]) => [p[0] + ((q[0] - p[0]) * k) / 8, p[1] + ((q[1] - p[1]) * k) / 8]);

// one trochoidal loop: narrow at the start, rounded cap at the end, bulging to the side of w's sign
function loop([x1, y1, x2, y2], w) {
  const len = Math.hypot(x2 - x1, y2 - y1);
  const [ux, uy] = [(x2 - x1) / len, (y2 - y1) / len];
  const p = (s, o) => [x1 + ux * len * s + uy * o * w, y1 + uy * len * s - ux * o * w];
  return smooth([p(0, 0), p(0.06, 0.35), p(0.3, 0.85), p(0.6, 1.05), p(0.85, 0.85), p(0.97, 0.4), p(1, 0), p(0.95, -0.35), p(0.8, -0.45), p(0.4, -0.35), p(0.06, -0.3)], true);
}

const loopSets = [
  { w: 12, grow: 0.5, items: [[677, 244, 690, 187], [687, 263, 708, 187], [698, 270, 722, 187], [711, 276, 737, 187], [723, 282, 752, 187], [735, 286, 767, 187], [746, 291, 782, 187], [758, 296, 797, 187], [770, 301, 812, 187], [782, 306, 828, 187], [793, 313, 845, 187], [805, 322, 863, 187], [817, 332, 883, 187], [830, 344, 906, 187]] },
  { w: -15, grow: -0.3, items: [[690, 495, 694, 599], [703, 491, 709, 599], [717, 488, 723, 599], [730, 491, 737, 599], [742, 496, 750, 599], [753, 502, 764, 599], [764, 508, 778, 599], [776, 512, 794, 599], [789, 513, 812, 599], [800, 511, 829, 599], [811, 506, 848, 599], [821, 498, 868, 599], [828, 489, 893, 599], [834, 476, 926, 598]] },
  { w: -12, grow: 0, items: [[1062, 402, 1042, 297], [1074, 401, 1057, 297], [1085, 400, 1071, 297], [1097, 399, 1085, 297], [1108, 399, 1099, 297], [1119, 400, 1113, 297], [1131, 400, 1127, 297], [1142, 402, 1140, 297], [1154, 403, 1154, 297], [1165, 405, 1167, 297], [1176, 408, 1180, 297], [1187, 412, 1193, 299]] },
  { w: 12, grow: -0.2, items: [[1197, 413, 1205, 320], [1205, 418, 1218, 345], [1213, 423, 1230, 362], [1223, 428, 1242, 377], [1232, 435, 1253, 392], [1240, 440, 1263, 403], [1248, 447, 1273, 413], [1257, 453, 1283, 423], [1265, 462, 1293, 432], [1272, 470, 1303, 440], [1282, 480, 1313, 449], [1293, 487, 1325, 457], [1311, 488, 1337, 466], [1326, 488, 1348, 475]] },
  { w: -20, grow: 2, items: [[1462, 526, 1415, 388], [1475, 520, 1437, 398], [1487, 515, 1456, 403], [1498, 511, 1474, 408], [1508, 457, 1492, 412]] },
  { w: 10, grow: 0, items: [[1202, 190, 1290, 236]] },
  { w: 8, grow: -0.5, items: [[954, 392, 1016, 413], [954, 407, 1000, 423], [954, 422, 988, 433], [954, 436, 978, 444], [953, 449, 968, 452]] },
  { w: 13, grow: 0, items: [[948, 346, 970, 298], [937, 325, 955, 297]] },
];

const spiral = Array.from({ length: 106 }, (_, i) => {
  const a = Math.PI - (i / 24) * 2 * Math.PI;
  const r = 16 + (i / 24) * 12;
  return [1009 + r * Math.cos(a), 357 + r * Math.sin(a)];
});

function Toolpath() {
  return (
    <svg viewBox="346 77 1251 646" className="h-full w-full" role="img" aria-label="Ścieżka narzędzia">
      <defs>
        <clipPath id="part"><path d={smooth(part, true)} /></clipPath>
        <clipPath id="pocket"><path d={smooth(ring(0), true)} /></clipPath>
      </defs>
      <path d={smooth(stock, true)} fill="none" stroke="#46b830" strokeWidth="1.200" />
      <g fill="none" stroke="#80fbfb" strokeWidth="2.600" strokeLinejoin="round">
        <path d={smooth(part, true)} />
        <path d={smooth(ring(0), true)} />
        <g clipPath="url(#part)">
          {[1, 2, 3, 4, 5, 6, 7, 8].map((k) => <path key={k} d={smooth(ring(k), true)} />)}
          {[9, 10, 11].map((k) => <path key={k} d={smooth(ring(k).slice(23, 29), false)} />)}
          {loopSets.map((s) => s.items.map((item, i) => <path key={item.join()} d={loop(item, s.w + s.grow * i)} />))}
          <path d="M840 462L1026 534q8 4 4 12M833 477L1016 556q6 4 3 12M828 488L1003 572q8 4 4 10M1405 390L1377 598M1222 187q40 8 68 38M1250 187q24 8 40 24" />
        </g>
        <g clipPath="url(#pocket)">
          <circle cx="1009" cy="357" r="13" />
          <path d={smooth(spiral, false)} />
          <path d="M985 297q40 6 135 41L1243 377M1031 300L1057 403" />
        </g>
      </g>
      <g fill="none" stroke="#9af4f4" strokeWidth="3.200">
        <path d="M1089 128L1004 340M666 208L840 440M1305 256L1514 424M1095 511L1165 525M1102 507L1197 553" strokeDasharray="4 4" />
        <path d="M1263 402L1322 457M957 462L1057 405" strokeDasharray="4 4" />
        <path d="M834 363L1102 507" strokeDasharray="4 12" />
      </g>
      <path d="M660 547L1057 407" stroke="#a8b0b0" strokeDasharray="5 4" />
      <circle cx="1089.500" cy="393" r="13" fill="#dcc4c2" />
      <path d="M1089.500 380v-5" stroke="#20b030" strokeWidth="2" />
      <path d="M1102 393h6" stroke="#b04040" />
    </svg>
  );
}

/* ---------- dialog ---------- */

const sunken = 'border border-t-[#707070] border-l-[#707070] border-r-white border-b-white shadow-[inset_1px_1px_0_#404040]';
const raised = 'border border-t-white border-l-white border-r-[#404040] border-b-[#404040] shadow-[inset_-1px_-1px_0_#808080]';
const disabledText = 'text-[#8a8883] [text-shadow:1px_1px_0_#fff]';

function Check({ label, disabled, focused }) {
  return (
    <label className={clsx('flex h-4 items-center gap-[5px]', disabled && disabledText)}>
      <input type="checkbox" disabled={disabled} className={clsx('h-[13px] w-[13px] appearance-none', sunken, disabled ? 'bg-[#d4d0c8]' : 'bg-white')} />
      <span className={clsx(focused && 'outline outline-dotted outline-black')}>{label}</span>
    </label>
  );
}

function RadioGroup({ legend, name, options, value, marked, className }) {
  const [picked, setPicked] = useState(value);
  return (
    <fieldset className={clsx('border border-[#808080] pl-[15px] shadow-[1px_1px_0_#fff]', className)}>
      <legend className="-ml-[10px] px-[3px] leading-[16px]">{legend}</legend>
      <div className="flex flex-col pt-px">
        {options.map((o) => (
          <label key={o} className="relative flex h-4 items-center gap-[5px]">
            {o === marked && <span className="absolute -top-2 -left-[18px] h-[34px] w-[93px] border-4 border-[#e11f26] bg-[#d4d0c8]" />}
            <input
              type="radio"
              name={name}
              checked={picked === o}
              onChange={() => setPicked(o)}
              className="relative h-3 w-3 appearance-none rounded-full border border-t-[#606060] border-l-[#606060] border-r-[#e8e6e0] border-b-[#e8e6e0] bg-white checked:bg-[radial-gradient(circle,#000_0_2px,#fff_2px)]"
            />
            <span className="relative">{o}</span>
          </label>
        ))}
      </div>
    </fieldset>
  );
}

function Field({ label, value = '', disabled, select, marked }) {
  return (
    <label className="relative flex h-5 items-center justify-between">
      <span className={clsx(disabled && disabledText)}>{label}</span>
      {select ? (
        <span className="relative h-5 w-[74px]">
          <select defaultValue={value} disabled={disabled} className={clsx('block h-full w-full appearance-none pl-[3px] opacity-100', sunken, disabled ? 'bg-[#d4d0c8]' : 'bg-white')}>
            <option>{value}</option>
          </select>
          <span className={clsx('pointer-events-none absolute top-[2px] right-[2px] flex h-4 w-4 items-center justify-center bg-[#d4d0c8]', raised, disabled ? 'text-[#8a8883]' : 'text-black')}>
            <Caret />
          </span>
        </span>
      ) : (
        <input type="text" defaultValue={value} disabled={disabled} className={clsx('h-5 w-[74px] pl-[2px] text-[12px]', sunken, disabled ? 'bg-[#d4d0c8]' : 'bg-white')} />
      )}
      {marked && <span className="pointer-events-none absolute -top-[9px] -right-[10px] -left-[7px] h-[36px] border-[5px] border-[#e11f26]" />}
    </label>
  );
}

const Rule = ({ label }) => (
  <div className="flex h-4 items-center">
    <span className="h-[2px] w-[6px] border-t border-[#808080] bg-white" />
    <span className="pr-2">{label}</span>
    <span className="h-[2px] flex-1 border-t border-[#808080] bg-white" />
  </div>
);

const Row = ({ children, className }) => <div className={clsx('grid grid-cols-[226px_234px] gap-x-[10px] gap-y-2 pl-[6px]', className)}>{children}</div>;

const dialogTabs = ['Ogólnie', 'Kontrola', 'Poziom', 'Ścianka', 'Wejścia'];

function RoughingDialog() {
  const [tab, setTab] = useState('Ogólnie');
  return (
    <section role="dialog" aria-label="Zgrubny" className="absolute top-[184px] left-[73px] z-10 w-[515px] border border-t-[#d4d0c8] border-l-[#d4d0c8] border-r-[#404040] border-b-[#404040] bg-[#d4d0c8] p-[2px] font-['Liberation_Sans',Arial,sans-serif] text-[11px] shadow-[inset_1px_1px_0_#fff,inset_-1px_-1px_0_#808080]">
      <div className="flex h-[18px] items-center justify-between bg-[linear-gradient(90deg,#0a246a,#a6caf0)] pr-[3px] pl-[2px] font-['Open_Sans',sans-serif] text-[11px] font-bold text-white">
        Zgrubny
        <button aria-label="Zamknij" className={clsx('flex h-[14px] w-4 items-center justify-center bg-[#d4d0c8]', raised)}>
          <svg viewBox="0 0 8 8" className="h-2 w-2" aria-hidden="true"><path d="M0 0l8 8M8 0L0 8" stroke="#000" strokeWidth="1.600" /></svg>
        </button>
      </div>
      <div className="px-[6px] pt-2">
        <div className="flex items-end" role="tablist">
          {dialogTabs.map((t) => (
            <button
              key={t}
              role="tab"
              aria-selected={t === tab}
              onClick={() => setTab(t)}
              className={clsx('rounded-t-sm border border-b-0 border-t-white border-l-white border-r-[#404040] bg-[#d4d0c8] shadow-[inset_-1px_0_0_#808080]', t === tab ? 'relative z-10 -mb-px h-[21px] px-[6px] pb-[3px]' : 'h-[18px] px-1')}
            >
              {t}
            </button>
          ))}
        </div>
        <div className={clsx('px-[6px] pt-3 pb-[37px]', raised)}>
          <div className="pl-[6px]"><Check label="Wskaż ponownie" focused /></div>
          <div className="mt-[9px] mb-[13px] h-[2px] border-t border-[#808080] bg-white" />
          <Row>
            <div className="flex flex-col gap-[5px]">
              <RadioGroup className="h-[57px] w-[221px]" legend="Typ modelu" name="model" options={['Profile', 'Powierzchnie']} value="Profile" />
              <RadioGroup className="h-[72px] w-[221px]" legend="Typ frezowania" name="milling" options={['Współbieżne', 'Przeciwbieżne', 'Optymalne']} value="Współbieżne" />
            </div>
            <div className="flex flex-col gap-[5px] pt-[3px]">
              <Check label="Obróbka resztek" disabled />
              <Check label="Wskaż cykl" disabled />
              <RadioGroup className="-mt-[3px] h-[90px] w-[230px]" legend="Strategia" name="strategy" options={['Koncentrycznie', 'Wierszowanie', 'Spirala', 'Wave']} value="Wave" marked="Wave" />
            </div>
          </Row>
          <Row className="mt-[7px]">
            <Field label="Naddatek" />
            <Field label="Naddatek Z" />
            <Field label="Naddatek XY" />
            <Field label="Szerokość (%)" value="50" marked />
            <Field label="Tolerancja" value="0.01" />
            <Field label="Kąt" disabled />
            <Field label="Szerokość wykończ." disabled />
          </Row>
          <div className="mt-[5px]"><Rule label="Półfabrykat" /></div>
          <Row className="mt-2">
            <Field label="Typ" value="Brak" select />
            <Field label="Naddatek" />
          </Row>
          <div className="mt-[5px]"><Rule label="Posuwy" /></div>
          <Row className="mt-[7px]">
            <Field label="Roboczy (mm/min)" value="594.178" />
            <Field label="Wgłębny (mm/min)" value="594.178" />
            <Field label={<>Obroty (<u>O</u>br/min)</>} value="2122.07" />
            <Field label="Technologia" disabled select />
          </Row>
        </div>
        <div className="flex justify-end gap-[6px] pt-[6px] pb-[6px]">
          {['OK', 'Anuluj', 'Pomoc'].map((b) => (
            <button key={b} className={clsx('h-[23px] w-[75px]', raised, b === 'OK' && 'outline -outline-offset-1 outline-black')}>{b}</button>
          ))}
        </div>
      </div>
    </section>
  );
}

/* ---------- bottom panels ---------- */

function DockPanel({ title, className, children }) {
  return (
    <section className={clsx('flex flex-col', className)}>
      <div className="flex h-[17px] shrink-0 items-center justify-between bg-[#808080] pr-[6px] pl-1 text-[11px] text-[#d4d0c8]">
        {title}
        <TitleTools className="text-[#333]" />
      </div>
      <div className="flex min-h-0 flex-1 flex-col bg-[#d4d0c8]">{children}</div>
    </section>
  );
}

function Coordinates() {
  return (
    <DockPanel title="Współrzędne" className="w-[610px] shrink-0">
      <div className="flex flex-1 items-start pt-1 pl-2 font-['Liberation_Sans',Arial,sans-serif] text-[12px]">
        {[['X', '0.00'], ['Y', '0.00'], ['Z', '725.00']].map(([axis, v]) => (
          <label key={axis} className="mr-2 flex items-center gap-px">
            <span className="pt-[2px]">{axis}</span>
            <input readOnly defaultValue={v} className={clsx('h-[23px] w-[67px] pb-1 pl-[2px]', sunken)} />
          </label>
        ))}
        <div className="flex gap-[2px] pt-[6px] text-[11px]">
          <button className={clsx('h-4 w-[65px] bg-[#eceae6] leading-none', sunken)}>ZERO</button>
          <button className={clsx('h-4 w-[65px] leading-none', raised)}>Globalnie</button>
          <button className={clsx('h-4 w-[65px] leading-none', raised)}>Obrabiarka</button>
        </div>
      </div>
      <button aria-label="Rozwiń" className="flex h-[11px] shrink-0 items-center justify-center border border-[#808080]"><Caret className="h-[5px] w-[9px]" /></button>
    </DockPanel>
  );
}

const player = [
  { name: 'Stop', d: 'M4 4h7v7H4z' },
  { name: 'Początek', d: 'M1 3h2v10H1zM8 3v10L3 8zM14 3v10L9 8z' },
  { name: 'Wstecz', d: 'M10 3v10L5 8z', on: true },
  { name: 'Dalej', d: 'M5 3v10l5-5z', on: true },
  { name: 'Koniec', d: 'M12 3h2v10h-2zM7 3v10l5-5zM1 3v10l5-5z' },
  { name: 'Powiększ', d: 'M6 1a5 5 0 1 0 3 9l4 4 2-2-4-4A5 5 0 0 0 6 1zM5.500 3h1v2.500H9v1H6.500V9h-1V6.500H3v-1h2.500z' },
];

function Simulation() {
  return (
    <DockPanel title="Symulacja" className="min-w-0 flex-1">
      <div className="flex min-h-0 flex-1">
        <div className="flex min-w-0 flex-1 flex-col pt-1 pl-[10px] font-['Liberation_Sans',Arial,sans-serif] text-[11px]">
          <div className="flex items-center">
            <input
              type="range"
              aria-label="Postęp"
              defaultValue="59"
              className={clsx('h-[15px] min-w-0 flex-1 appearance-none bg-white', sunken, '[&::-webkit-slider-thumb]:h-[21px] [&::-webkit-slider-thumb]:w-[9px] [&::-webkit-slider-thumb]:appearance-none [&::-webkit-slider-thumb]:border [&::-webkit-slider-thumb]:border-white [&::-webkit-slider-thumb]:border-r-[#404040] [&::-webkit-slider-thumb]:border-b-[#404040] [&::-webkit-slider-thumb]:bg-[#e8e6e0]')}
            />
            <div className="flex w-[150px] items-center justify-between pr-[5px] pb-1 pl-3">
              {player.map((p) => (
                <button key={p.name} aria-label={p.name} className="flex">
                  <svg viewBox="0 0 15 16" className="h-[14px] w-[13px]" aria-hidden="true"><path d={p.d} fill={p.on ? '#00007c' : '#848280'} fillRule="evenodd" /></svg>
                </button>
              ))}
            </div>
          </div>
          <div className="flex items-center pt-1">
            <button className={clsx('flex h-[23px] w-[71px] items-center gap-px pl-[6px]', raised)}>
              <svg viewBox="0 0 12 12" className="h-[11px] w-[11px]" aria-hidden="true"><circle cx="6" cy="6" r="5.200" fill="#fff" stroke="#222" strokeWidth="1.200" /><path d="M6 1v6" stroke="#222" strokeWidth="1.400" /></svg>
              Stałe
            </button>
            <input
              type="range"
              aria-label="Prędkość"
              defaultValue="0"
              className="mr-2 ml-3 h-3 min-w-0 flex-1 appearance-none bg-[linear-gradient(transparent_5px,#404040_5px_7px,#fff_7px_8px,transparent_8px)] [&::-webkit-slider-thumb]:h-3 [&::-webkit-slider-thumb]:w-[6px] [&::-webkit-slider-thumb]:appearance-none [&::-webkit-slider-thumb]:border [&::-webkit-slider-thumb]:border-white [&::-webkit-slider-thumb]:border-r-[#404040] [&::-webkit-slider-thumb]:border-b-[#404040] [&::-webkit-slider-thumb]:bg-[#d4d0c8]"
            />
            <div className="flex flex-col gap-px">
              <button aria-label="Więcej" className={clsx('flex h-[11px] w-4 items-center justify-center', raised)}><Caret className="h-[2px] w-1 rotate-180" /></button>
              <button aria-label="Mniej" className={clsx('flex h-[11px] w-4 items-center justify-center', raised)}><Caret className="h-[2px] w-1" /></button>
            </div>
            <input aria-label="Krok" readOnly defaultValue="1" className={clsx('h-[23px] w-[25px] pb-1 pl-1 text-[12px]', sunken)} />
            <span className="w-[150px] pt-1 pl-2">Zgrubny</span>
          </div>
        </div>
        <button aria-label="Przewiń" className="mr-[3px] flex w-[10px] items-center justify-center border border-[#808080]"><Caret className="w-[9px] -rotate-90" /></button>
      </div>
    </DockPanel>
  );
}

const modes = ['DOWOLNE', 'ELEMENT', 'SIATKA', 'INS', 'PRO', 'XY', 'MM'];

export default function App() {
  return (
    <div className="relative flex h-screen min-w-[1200px] flex-col overflow-hidden bg-linear-to-r from-[#d4d0c8] to-[#fdfdfc] font-['Open_Sans','Noto_Sans',sans-serif] text-[#111]">
      <Header />
      <main className="flex min-h-0 flex-1 pt-px">
        <SideTabs />
        <TreePanel />
        <div className="ml-1 flex min-w-0 flex-1 flex-col">
          <div className="mr-[3px] min-h-0 flex-1 border-t border-l border-[#606060] bg-[linear-gradient(#000,#808080)]">
            <Toolpath />
          </div>
          <div className="mr-[3px] flex h-[21px] shrink-0 items-center justify-between border-b border-white bg-[#d4d0c8] pl-px">
            <span className="h-5 w-[101px] bg-[#808080] pl-1 font-['Liberation_Sans',sans-serif] text-[11px] leading-[14px] text-[#e4e2de]">Góra CPL</span>
            <span className="flex pr-px pb-1 text-black">
              {['M1 5h8', 'M5 1v8', ''].map((d) => (
                <button key={d} aria-label="Okno" className={clsx('flex h-3 w-[13px] items-center justify-center', raised, !d && 'ml-[2px] text-[#808080]')}>
                  <svg viewBox="0 0 10 10" className="h-[8px] w-[10px]" aria-hidden="true">
                    <path d={d ? `M1 1h8v8H1z${d}` : 'M1 1l8 8M9 1L1 9'} fill="none" stroke="currentColor" strokeWidth="1.400" />
                  </svg>
                </button>
              ))}
            </span>
          </div>
          <div className="mt-[5px] flex h-[84px] shrink-0 gap-1">
            <Coordinates />
            <Simulation />
          </div>
        </div>
      </main>
      <footer className="flex h-5 shrink-0 items-center justify-between pr-[3px] pl-[2px]">
        <span className="text-[11px]">Edycja instrukcji:&nbsp; Zgrubny</span>
        <div className="flex gap-px text-[11px] leading-[15px]">
          {modes.map((m, i) => (
            <button key={m} className={clsx('border border-[#808080] bg-white px-px', i > 4 ? 'text-black' : 'text-[#808080]')}>{m}</button>
          ))}
        </div>
      </footer>
      <RoughingDialog />
    </div>
  );
}
